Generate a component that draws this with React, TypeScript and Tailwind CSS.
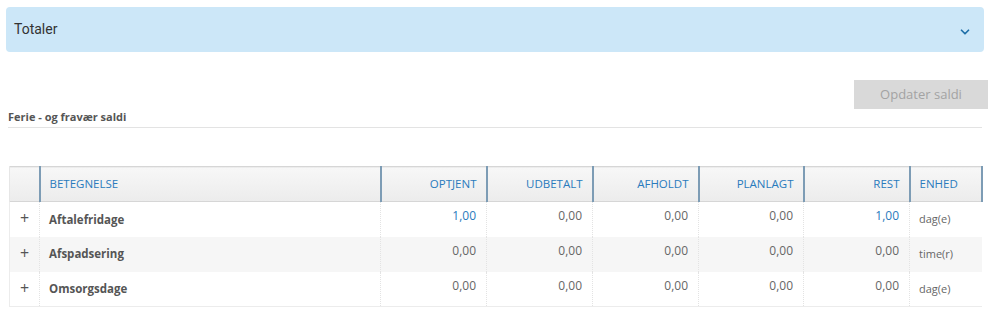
import { ChevronDown } from 'lucide-react';

const rows = [
  { name: 'Aftalefridage', optjent: '1,00', udbetalt: '0,00', afholdt: '0,00', planlagt: '0,00', rest: '1,00', enhed: 'dag(e)', hl: true },
  { name: 'Afspadsering', optjent: '0,00', udbetalt: '0,00', afholdt: '0,00', planlagt: '0,00', rest: '0,00', enhed: 'time(r)', hl: false },
  { name: 'Omsorgsdage', optjent: '0,00', udbetalt: '0,00', afholdt: '0,00', planlagt: '0,00', rest: '0,00', enhed: 'dag(e)', hl: false },
];

const numCols = ['OPTJENT', 'UDBETALT', 'AFHOLDT', 'PLANLAGT', 'REST'];

export default function App() {
  return (
    <div className="w-[998px] h-[324px] bg-white pt-[7px] font-['Open_Sans',sans-serif]">
      {/* Totaler panel */}
      <div className="ml-[6px] w-[978px] h-[45px] rounded-[4px] bg-[#cce7f8] flex items-center justify-between pl-[8px] pr-[12px]">
        <span className="text-[14px] text-[#333] font-['Roboto',sans-serif]">Totaler</span>
        <ChevronDown size={14} strokeWidth={3} className="text-[#1f6fa8] mt-[4px]" />
      </div>

      <div className="flex justify-end mt-[28px] pr-[10px]">
        <button className="w-[134px] h-[29px] bg-[#d9d9d9] text-[13px] text-[#a3a3a3]">Opdater saldi</button>
      </div>

      <div className="ml-[8px] w-[974px] border-b border-[#e3e3e3] pb-[2px] text-[11px] leading-[16px]">
        <span className="font-bold text-[#555]">Ferie - og fravær saldi</span>
      </div>

      <table className="ml-[9px] mt-[38px] w-[972px] table-fixed border-collapse text-[11px]">
        <colgroup>
          <col className="w-[30px]" />
          <col className="w-[341px]" />
          <col className="w-[106px]" />
          <col className="w-[106px]" />
          <col className="w-[106px]" />
          <col className="w-[105px]" />
          <col className="w-[106px]" />
          <col className="w-[72px]" />
        </colgroup>
        <thead>
          <tr className="h-[35px] bg-gradient-to-b from-[#f7f7f7] to-[#ececec] border-t border-b border-[#d6d6d6]">
            <th className="border-l border-[#e6e6e6]" />
            <th className="border-l-2 border-[#7d9cb5] text-left font-normal text-[#2a7bbd] pl-[9px] text-[11.5px]">BETEGNELSE</th>
            {numCols.map((c) => (
              <th key={c} className="border-l-2 border-[#7d9cb5] text-right font-normal text-[#2a7bbd] pr-[9px] text-[11.5px]">{c}</th>
            ))}
            <th className="border-l-2 border-r-2 border-[#7d9cb5] text-left font-normal text-[#2a7bbd] pl-[9px] text-[11.5px]">ENHED</th>
          </tr>
        </thead>
        <tbody>
          {rows.map((r, i) => (
            <tr key={r.name} className={`h-[35px] ${i === 1 ? 'bg-[#f6f6f6]' : 'bg-white'} ${i === 2 ? 'border-b border-[#ececec]' : ''}`}>
              <td className="border-l border-[#ececec] text-center text-[16px] text-[#555] pb-[2px]">+</td>
              <td className="border-l border-dotted border-[#e3e3e3] pl-[9px] font-bold text-[#555] text-[11.5px]">{r.name}</td>
              {[r.optjent, r.udbetalt, r.afholdt, r.planlagt, r.rest].map((v, j) => (
                <td
                  key={j}
                  className={`border-l border-dotted border-[#e3e3e3] text-right pr-[10px] text-[12px] pb-[6px] ${
                    r.hl && (j === 0 || j === 4) ? 'text-[#2a7bbd]' : 'text-[#666]'
                  }`}
                >
                  {v}
                </td>
              ))}
              <td className="border-l border-dotted border-[#e3e3e3] pl-[9px] text-[#666] text-[11px]">{r.enhed}</td>
            </tr>
          ))}
        </tbody>
      </table>
    </div>
  );
}
